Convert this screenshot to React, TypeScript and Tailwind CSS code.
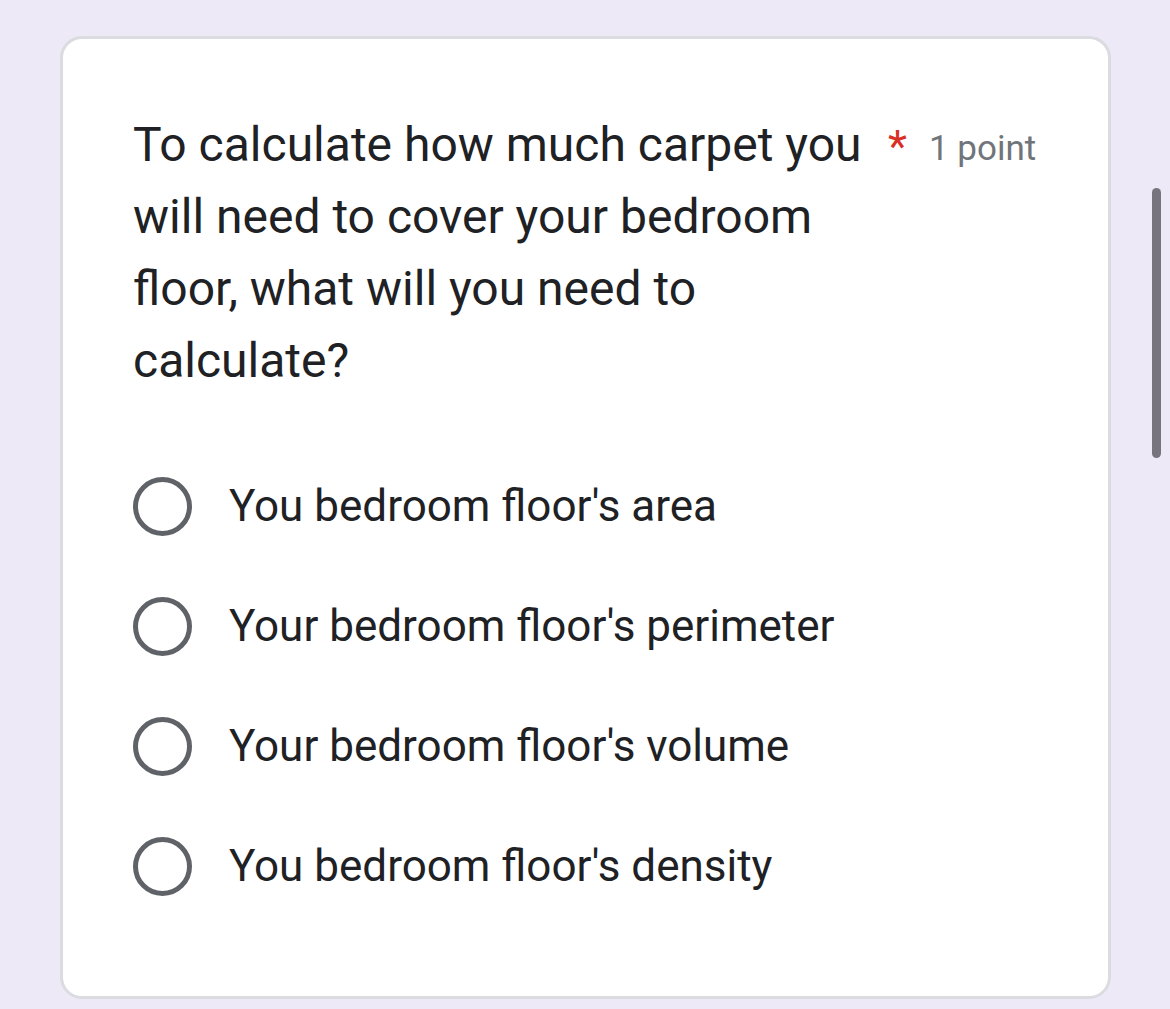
import React from "react";

const options = [
  "You bedroom floor's area",
  "Your bedroom floor's perimeter",
  "Your bedroom floor's volume",
  "You bedroom floor's density",
];

export default function App() {
  return (
    <div
      className="relative w-[1170px] h-[1009px] bg-[#ede9f7] overflow-hidden"
      style={{ fontFamily: "Roboto, 'Noto Sans', sans-serif" }}
    >
      <div className="absolute left-[1152px] top-[188px] w-[9px] h-[270px] rounded-full bg-[#78747d]" />
      <div className="pl-[60px] pt-[36px]">
        <div className="w-[1051px] h-[963px] bg-white border-[3px] border-[#dadce0] rounded-[22px] pl-[70px] pr-[70px] pt-[70px]">
          <div className="flex items-start">
            <div className="w-[740px] text-[48px] leading-[72px] text-[#202124]">
              To calculate how much carpet you will need to cover your bedroom floor, what will you need to calculate?
            </div>
            <span className="ml-[15px] mt-[2px] text-[44px] leading-[72px] text-[#d93025]">*</span>
            <span className="ml-[22px] mt-[4px] text-[35px] leading-[72px] text-[#70757a]">1 point</span>
          </div>
          <div className="mt-[80px] flex flex-col gap-[62px]">
            {options.map((o) => (
              <div key={o} className="flex items-center h-[58px]">
                <div className="w-[59px] h-[59px] rounded-full border-[5px] border-[#5f6368] shrink-0" />
                <span className="ml-[37px] text-[44px] text-[#202124] leading-[58px]">{o}</span>
              </div>
            ))}
          </div>
        </div>
      </div>
    </div>
  );
}
